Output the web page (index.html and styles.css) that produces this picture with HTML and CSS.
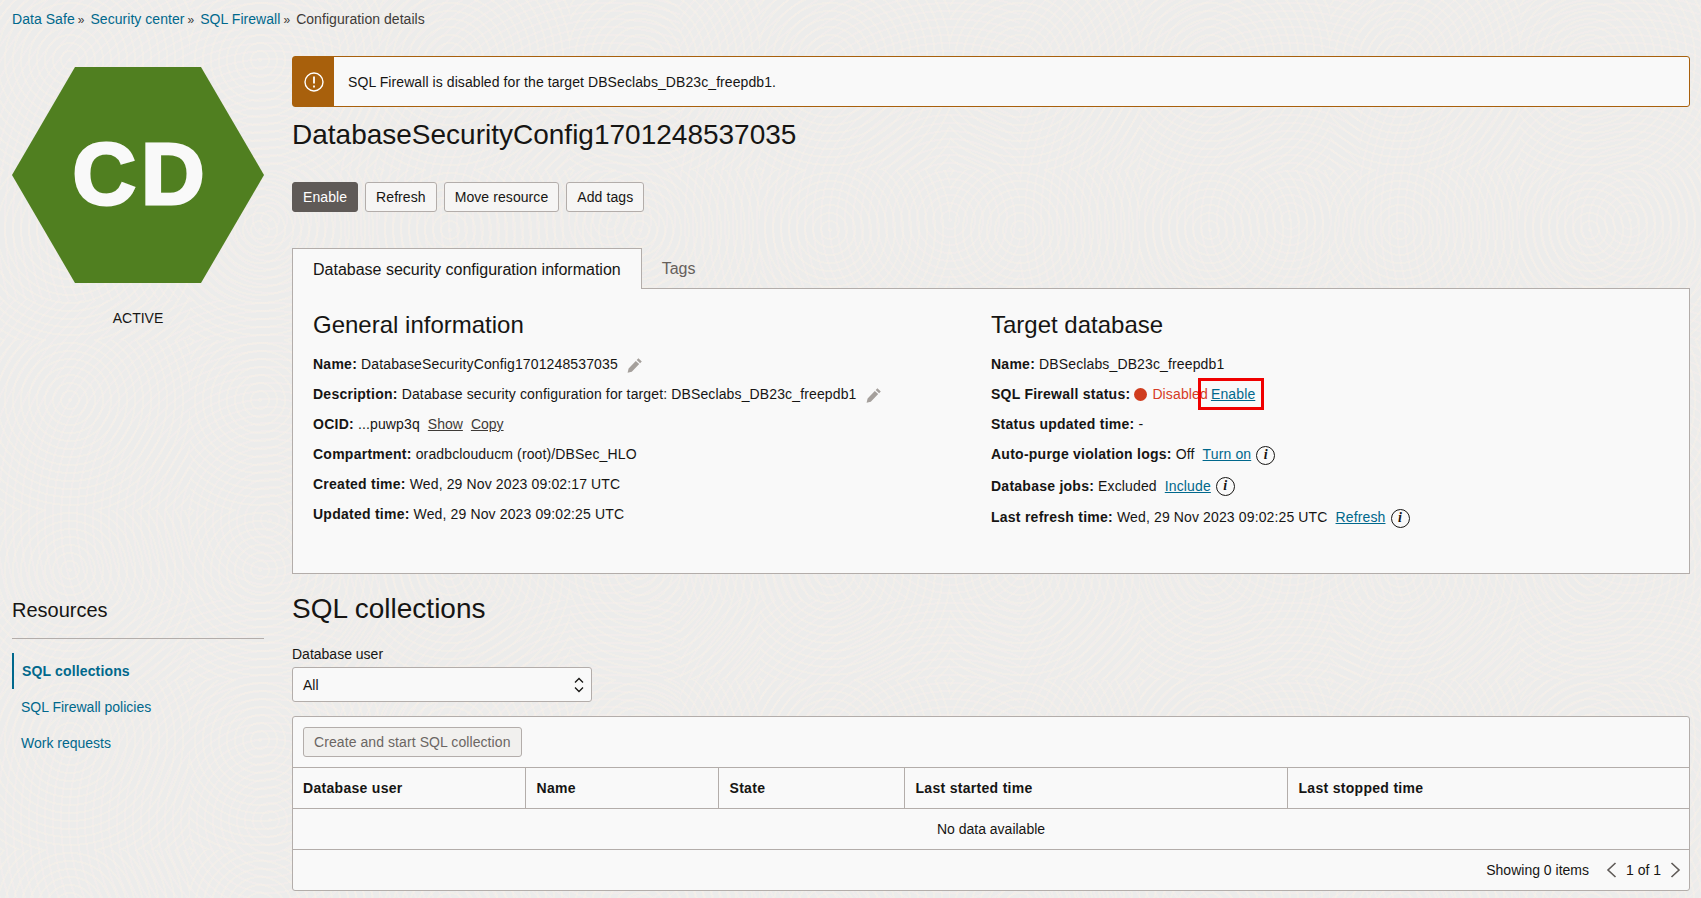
FILE: index.html
```html
<!DOCTYPE html>
<html lang="en">
<head>
<meta charset="UTF-8" />
<meta name="viewport" content="width=device-width, initial-scale=1" />
<title>Configuration details</title>
<link rel="stylesheet" href="styles.css">
</head>
<body>
  <nav class="crumbs">
    <a href="#">Data Safe</a><span class="sep">»</span>
    <a href="#">Security center</a><span class="sep">»</span>
    <a href="#">SQL Firewall</a><span class="sep">»</span>
    <span>Configuration details</span>
  </nav>

  <div class="page">
    <aside class="side-top">
      <div class="hex">CD</div>
      <div class="hex-state">ACTIVE</div>
    </aside>

    <main class="details">
      <div class="banner">
        <div class="banner-icon">
          <svg width="20" height="20" viewBox="0 0 20 20" fill="none" stroke="#fff" stroke-width="1.4">
            <circle cx="10" cy="10" r="9"/>
            <path d="M10 4.5v7" stroke-width="1.8"/>
            <path d="M10 13.5v2" stroke-width="1.8"/>
          </svg>
        </div>
        <div class="banner-text">SQL Firewall is disabled for the target DBSeclabs_DB23c_freepdb1.</div>
      </div>

      <h1>DatabaseSecurityConfig1701248537035</h1>

      <div class="actions">
        <button class="btn btn-primary">Enable</button>
        <button class="btn">Refresh</button>
        <button class="btn">Move resource</button>
        <button class="btn">Add tags</button>
      </div>

      <div class="tabs">
        <div class="tab tab-active">Database security configuration information</div>
        <div class="tab">Tags</div>
      </div>

      <section class="panel">
        <div class="panel-col">
          <h2>General information</h2>
          <div class="row"><b>Name:</b> DatabaseSecurityConfig1701248537035
            <svg class="pencil" width="16" height="16" viewBox="0 0 16 16"><path d="M11.4 1.2l3.4 3.2-1.7 1.8-3.4-3.2zM8.8 3.9l3.4 3.2-7.4 7.6-4.2 1 1-4.2z" fill="#a5a09c"/></svg>
          </div>
          <div class="row"><b>Description:</b> Database security configuration for target: DBSeclabs_DB23c_freepdb1
            <svg class="pencil" width="16" height="16" viewBox="0 0 16 16"><path d="M11.4 1.2l3.4 3.2-1.7 1.8-3.4-3.2zM8.8 3.9l3.4 3.2-7.4 7.6-4.2 1 1-4.2z" fill="#a5a09c"/></svg>
          </div>
          <div class="row"><b>OCID:</b> ...puwp3q <a class="plain" href="#">Show</a> <a class="plain" href="#">Copy</a></div>
          <div class="row"><b>Compartment:</b> oradbclouducm (root)/DBSec_HLO</div>
          <div class="row"><b>Created time:</b> Wed, 29 Nov 2023 09:02:17 UTC</div>
          <div class="row"><b>Updated time:</b> Wed, 29 Nov 2023 09:02:25 UTC</div>
        </div>
        <div class="panel-col">
          <h2>Target database</h2>
          <div class="row"><b>Name:</b> DBSeclabs_DB23c_freepdb1</div>
          <div class="row"><b>SQL Firewall status:</b> <span class="dot"></span><span class="red">Disabled</span> <a class="marked" href="#">Enable</a></div>
          <div class="row"><b>Status updated time:</b> -</div>
          <div class="row row-tall"><b>Auto-purge violation logs:</b> Off <a class="gap" href="#">Turn on</a> <span class="info">i</span></div>
          <div class="row row-tall"><b>Database jobs:</b> Excluded <a class="gap" href="#">Include</a> <span class="info">i</span></div>
          <div class="row"><b>Last refresh time:</b> Wed, 29 Nov 2023 09:02:25 UTC <a class="gap" href="#">Refresh</a> <span class="info">i</span></div>
        </div>
      </section>
    </main>

    <aside class="side-bottom">
      <h3>Resources</h3>
      <ul class="res-nav">
        <li class="current"><a href="#">SQL collections</a></li>
        <li><a href="#">SQL Firewall policies</a></li>
        <li><a href="#">Work requests</a></li>
      </ul>
    </aside>

    <section class="collections">
      <h2 class="big">SQL collections</h2>
      <label class="field-label">Database user</label>
      <div class="select">
        <span>All</span>
        <svg width="12" height="18" viewBox="0 0 12 18" fill="none" stroke="#161513" stroke-width="1.3"><path d="M2 6.5l4-4 4 4"/><path d="M2 11.5l4 4 4-4"/></svg>
      </div>

      <div class="card">
        <div class="toolbar"><button class="btn btn-off">Create and start SQL collection</button></div>
        <table>
          <colgroup>
            <col class="c1"><col class="c2"><col class="c3"><col class="c4"><col>
          </colgroup>
          <thead>
            <tr>
              <th>Database user</th>
              <th>Name</th>
              <th>State</th>
              <th>Last started time</th>
              <th>Last stopped time</th>
            </tr>
          </thead>
          <tbody>
            <tr><td colspan="5">No data available</td></tr>
          </tbody>
        </table>
        <div class="pager">
          <span>Showing 0 items</span>
          <svg class="prev" width="11" height="16" viewBox="0 0 11 16" fill="none" stroke="#5f5a57" stroke-width="1.6"><path d="M9.5 1L2 8l7.5 7"/></svg>
          <span>1 of 1</span>
          <svg class="next" width="11" height="16" viewBox="0 0 11 16" fill="none" stroke="#5f5a57" stroke-width="1.6"><path d="M1.5 1L9 8l-7.5 7"/></svg>
        </div>
      </div>
    </section>
  </div>
</body>
</html>
```

FILE: styles.css
```css
*, *::after {
  box-sizing: border-box;
}
html, body {
  height: 100%;
}
body {
  margin: 0;
  font-family: "Liberation Sans", Arial, sans-serif;
  font-size: 14px;
  color: #161513;
  overflow: hidden;
  background-color: #ececeb;
  /* fingerprint-like swirl texture, tiled */
  background-image:
    repeating-radial-gradient(circle at 70px 60px, rgba(246,241,232,0.55) 0 2px, transparent 2px 8px),
    repeating-radial-gradient(circle at 270px 220px, rgba(246,238,236,0.55) 0 2px, transparent 2px 8px);
  background-size: 190px 170px, 340px 300px;
}
a {
  color: #00688c;
}
.crumbs {
  height: 38px;
  padding: 11px 12px 0;
  line-height: 16px;
  letter-spacing: 0.05px;
  color: #3f3b38;
}
.crumbs a {
  text-decoration: none;
}
.sep {
  margin: 0 2px 0 3px;
  font-size: 12px;
}

.page {
  display: grid;
  grid-template-columns: 252px 1398px;
  column-gap: 28px;
  padding: 18px 0 0 12px;
}

/* left column */
.side-top {
  padding-top: 11px;
}
.hex {
  width: 252px;
  height: 216px;
  background: #507f20;
  clip-path: polygon(25% 0, 75% 0, 100% 50%, 75% 100%, 25% 100%, 0 50%);
  color: #f9f9f9;
  font-size: 88px;
  font-weight: bold;
  line-height: 214px;
  text-align: center;
  text-indent: 6px;
  -webkit-text-stroke: 3px #f9f9f9;
  letter-spacing: 5px;
}
.hex-state {
  margin-top: 27px;
  text-align: center;
}
.side-bottom h3 {
  margin: 22px 0 0;
  padding-bottom: 14px;
  border-bottom: 1px solid #b3adaa;
  font-size: 20px;
  font-weight: normal;
  line-height: 28px;
}
.res-nav {
  list-style: none;
  margin: 14px 0 0;
  padding: 0;
}
.res-nav li {
  height: 36px;
  line-height: 36px;
  padding-left: 9px;
}
.res-nav a {
  text-decoration: none;
}
.res-nav .current {
  border-left: 2px solid #00688c;
  padding-left: 8px;
  font-weight: bold;
  letter-spacing: 0.15px;
}

/* details */
.banner {
  display: flex;
  height: 51px;
  background: #f9f9f9;
  border: 1px solid #a8600c;
  border-radius: 3px;
}
.banner-icon {
  width: 41px;
  background: #a8600c;
  display: flex;
  align-items: center;
  justify-content: center;
}
.banner-text {
  padding-left: 14px;
  line-height: 50px;
  letter-spacing: 0.08px;
}
h1 {
  margin: 8px 0 0;
  font-size: 28px;
  font-weight: normal;
  line-height: 40px;
}
.actions {
  display: flex;
  gap: 7px;
  margin-top: 27px;
}
.btn {
  height: 30px;
  padding: 0 10px;
  font-family: inherit;
  font-size: 14px;
  letter-spacing: 0.08px;
  color: #161513;
  background: #f6f5f4;
  border: 1px solid #b3adaa;
  border-radius: 3px;
}
.btn-primary {
  background: #5f5a57;
  border-color: #5f5a57;
  color: #fff;
}
.btn-off {
  color: #6b6663;
  background: #f1f0ee;
}
.tabs {
  display: flex;
  margin-top: 36px;
}
.tab {
  height: 40px;
  padding: 0 20px;
  font-size: 16px;
  line-height: 42px;
  color: #665f5b;
}
.tab-active {
  height: 41px;
  line-height: 42px;
  margin-bottom: -1px;
  color: #161513;
  background: #f9f9f9;
  border: 1px solid #b3adaa;
  border-bottom: none;
  position: relative;
}
.panel {
  display: grid;
  grid-template-columns: 678px 1fr;
  height: 286px;
  padding: 21px 0 0 20px;
  background: #f9f9f9;
  border: 1px solid #b3adaa;
}
h2 {
  margin: 0 0 9px;
  font-size: 24px;
  font-weight: normal;
  line-height: 30px;
}
.row {
  height: 30px;
  line-height: 30px;
  white-space: nowrap;
  letter-spacing: 0.13px;
}
.row b {
  letter-spacing: 0.25px;
}
.row-tall {
  height: 31.5px;
}
.pencil {
  margin-left: 5px;
  vertical-align: -4px;
}
.plain {
  color: #3f3b38;
  margin-left: 4px;
  letter-spacing: 0;
}
.gap {
  margin-left: 4px;
}
.dot {
  display: inline-block;
  width: 13px;
  height: 13px;
  margin: 0 5px 0 0;
  border-radius: 50%;
  background: #d03c1e;
  vertical-align: -2px;
}
.red {
  color: #d63b25;
}
.marked {
  position: relative;
  margin-left: -1px;
}
.marked::after {
  content: "";
  position: absolute;
  left: -13px;
  right: -9px;
  top: -8px;
  height: 32px;
  border: 3px solid #f00000;
}
.info {
  display: inline-block;
  width: 19px;
  height: 19px;
  margin-left: 1px;
  border: 1.2px solid #161513;
  border-radius: 50%;
  font-family: "Liberation Serif", serif;
  font-style: italic;
  font-weight: bold;
  font-size: 14px;
  line-height: 16px;
  text-align: center;
  vertical-align: middle;
}

/* collections */
.collections h2.big {
  margin: 0;
  padding-top: 15px;
  font-size: 28px;
  line-height: 40px;
}
.field-label {
  display: block;
  margin-top: 17px;
  line-height: 16px;
}
.select {
  display: flex;
  align-items: center;
  justify-content: space-between;
  width: 300px;
  height: 35px;
  margin-top: 5px;
  padding: 0 6px 0 10px;
  background: #f9f9f9;
  border: 1px solid #b3adaa;
  border-radius: 3px;
}
.card {
  margin-top: 14px;
  background: #f9f9f9;
  border: 1px solid #b3adaa;
  border-radius: 3px;
}
.toolbar {
  height: 50px;
  padding: 10px;
}
table {
  width: 100%;
  table-layout: fixed;
  border-collapse: collapse;
}
.c1 { width: 232px; }
.c2 { width: 193px; }
.c3 { width: 186px; }
.c4 { width: 383px; }
th, td {
  height: 41px;
  padding: 0 10px;
  border-top: 1px solid #b3adaa;
  border-bottom: 1px solid #b3adaa;
}
th {
  padding-left: 11px;
  text-align: left;
  letter-spacing: 0.3px;
  border-left: 1px solid #b3adaa;
}
th:first-child {
  padding-left: 10px;
  border-left: none;
}
td {
  text-align: center;
}
.pager {
  display: flex;
  align-items: center;
  justify-content: flex-end;
  height: 40px;
  padding-right: 8px;
}
.prev {
  margin: 0 9px 0 17px;
}
.next {
  margin-left: 9px;
}
```
